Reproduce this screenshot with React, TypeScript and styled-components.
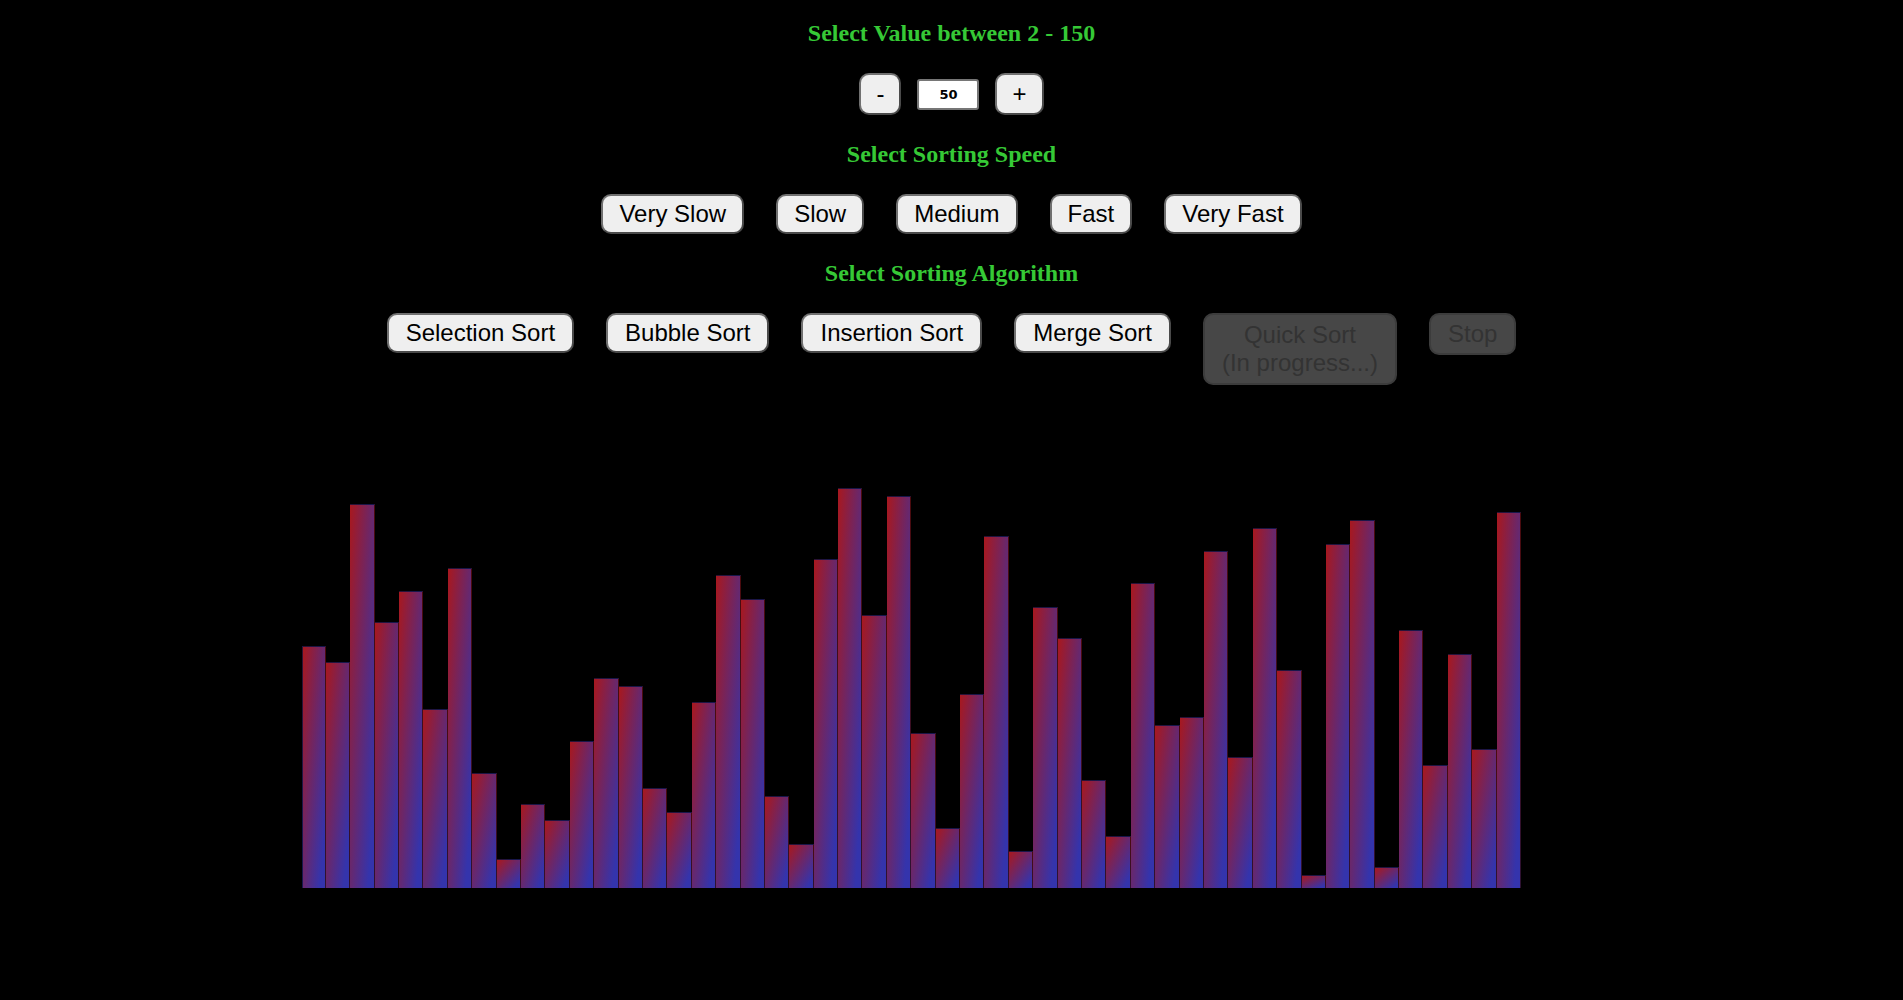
import React from "react";
import styled, { createGlobalStyle } from "styled-components";

const GlobalStyle = createGlobalStyle`
  html, body {
    margin: 0;
    padding: 0;
    background: #000;
  }
  body {
    font-family: "Liberation Sans", Arial, sans-serif;
  }
`;

const Page = styled.div`
  display: flex;
  flex-direction: column;
  align-items: center;
  padding-top: 19px;
  min-height: 1000px;
  box-sizing: border-box;
  background: #000;
`;

const Heading = styled.h2`
  margin: 0 0 26px;
  font: 700 24px/28px "Liberation Serif", "Times New Roman", serif;
  color: #36c936;
  text-align: center;
`;

const Row = styled.div<{ $gap: number; $align?: string }>`
  display: flex;
  justify-content: center;
  align-items: ${(p) => p.$align ?? "flex-start"};
  gap: ${(p) => p.$gap}px;
  margin-bottom: 25px;
`;

const Button = styled.button<{ $padY?: number; $padX?: number }>`
  font-family: "Liberation Sans", Arial, sans-serif;
  font-size: 24px;
  line-height: normal;
  padding: ${(p) => p.$padY ?? 4}px ${(p) => p.$padX ?? 17}px;
  background: #efefef;
  color: #000;
  border: 2px solid;
  border-color: #707070 #4a4a4a #4a4a4a #707070;
  border-radius: 10px;
  cursor: pointer;
  text-align: center;

  &:disabled {
    background: #474747;
    color: #333;
    border-color: #3c3c3c;
    cursor: default;
  }
`;

const CountInput = styled.input`
  width: 62px;
  height: 31px;
  box-sizing: border-box;
  padding: 0;
  border: 2px solid #767676;
  border-radius: 3px;
  background: #fff;
  color: #000;
  text-align: center;
  font: 700 13px "DejaVu Sans", Verdana, sans-serif;
`;

const Chart = styled.div`
  width: 1300px;
  height: 478px;
  display: flex;
  align-items: flex-end;
`;

const Bar = styled.div<{ $first?: boolean }>`
  flex: none;
  width: 24.4px;
  box-sizing: border-box;
  border-top: 1px solid rgba(0, 0, 0, 0.55);
  border-right: 1px solid rgba(0, 0, 0, 0.55);
  border-left: ${(p) => (p.$first ? "1px solid rgba(0,0,0,0.55)" : "none")};
  background: linear-gradient(to bottom right, #a8181e 0%, #3434ac 88%);
`;

const heights = [
  242, 226, 384, 266, 297, 179, 320, 115, 29, 84,
  68, 147, 210, 202, 100, 76, 186, 313, 289, 92,
  44, 329, 400, 273, 392, 155, 60, 194, 352, 37,
  281, 250, 108, 52, 305, 163, 171, 337, 131, 360,
  218, 13, 344, 368, 21, 258, 123, 234, 139, 376,
];

const speeds = ["Very Slow", "Slow", "Medium", "Fast", "Very Fast"];
const algorithms = ["Selection Sort", "Bubble Sort", "Insertion Sort", "Merge Sort"];

export default function App() {
  return (
    <>
      <GlobalStyle />
      <Page>
        <Heading>Select Value between 2 - 150</Heading>
        <Row $gap={16} $align="center">
          <Button $padY={5} $padX={15}>-</Button>
          <CountInput type="text" value="50" readOnly />
          <Button $padY={5} $padX={15}>+</Button>
        </Row>

        <Heading>Select Sorting Speed</Heading>
        <Row $gap={32}>
          {speeds.map((s) => (
            <Button key={s} $padX={16}>{s}</Button>
          ))}
        </Row>

        <Heading>Select Sorting Algorithm</Heading>
        <Row $gap={32}>
          {algorithms.map((a) => (
            <Button key={a}>{a}</Button>
          ))}
          <Button $padY={6} disabled>
            Quick Sort
            <br />
            (In progress...)
          </Button>
          <Button $padY={5} disabled>
            Stop
          </Button>
        </Row>

        <Chart>
          {heights.map((h, i) => (
            <Bar key={i} $first={i === 0} style={{ height: `${h}px` }} />
          ))}
        </Chart>
      </Page>
    </>
  );
}
